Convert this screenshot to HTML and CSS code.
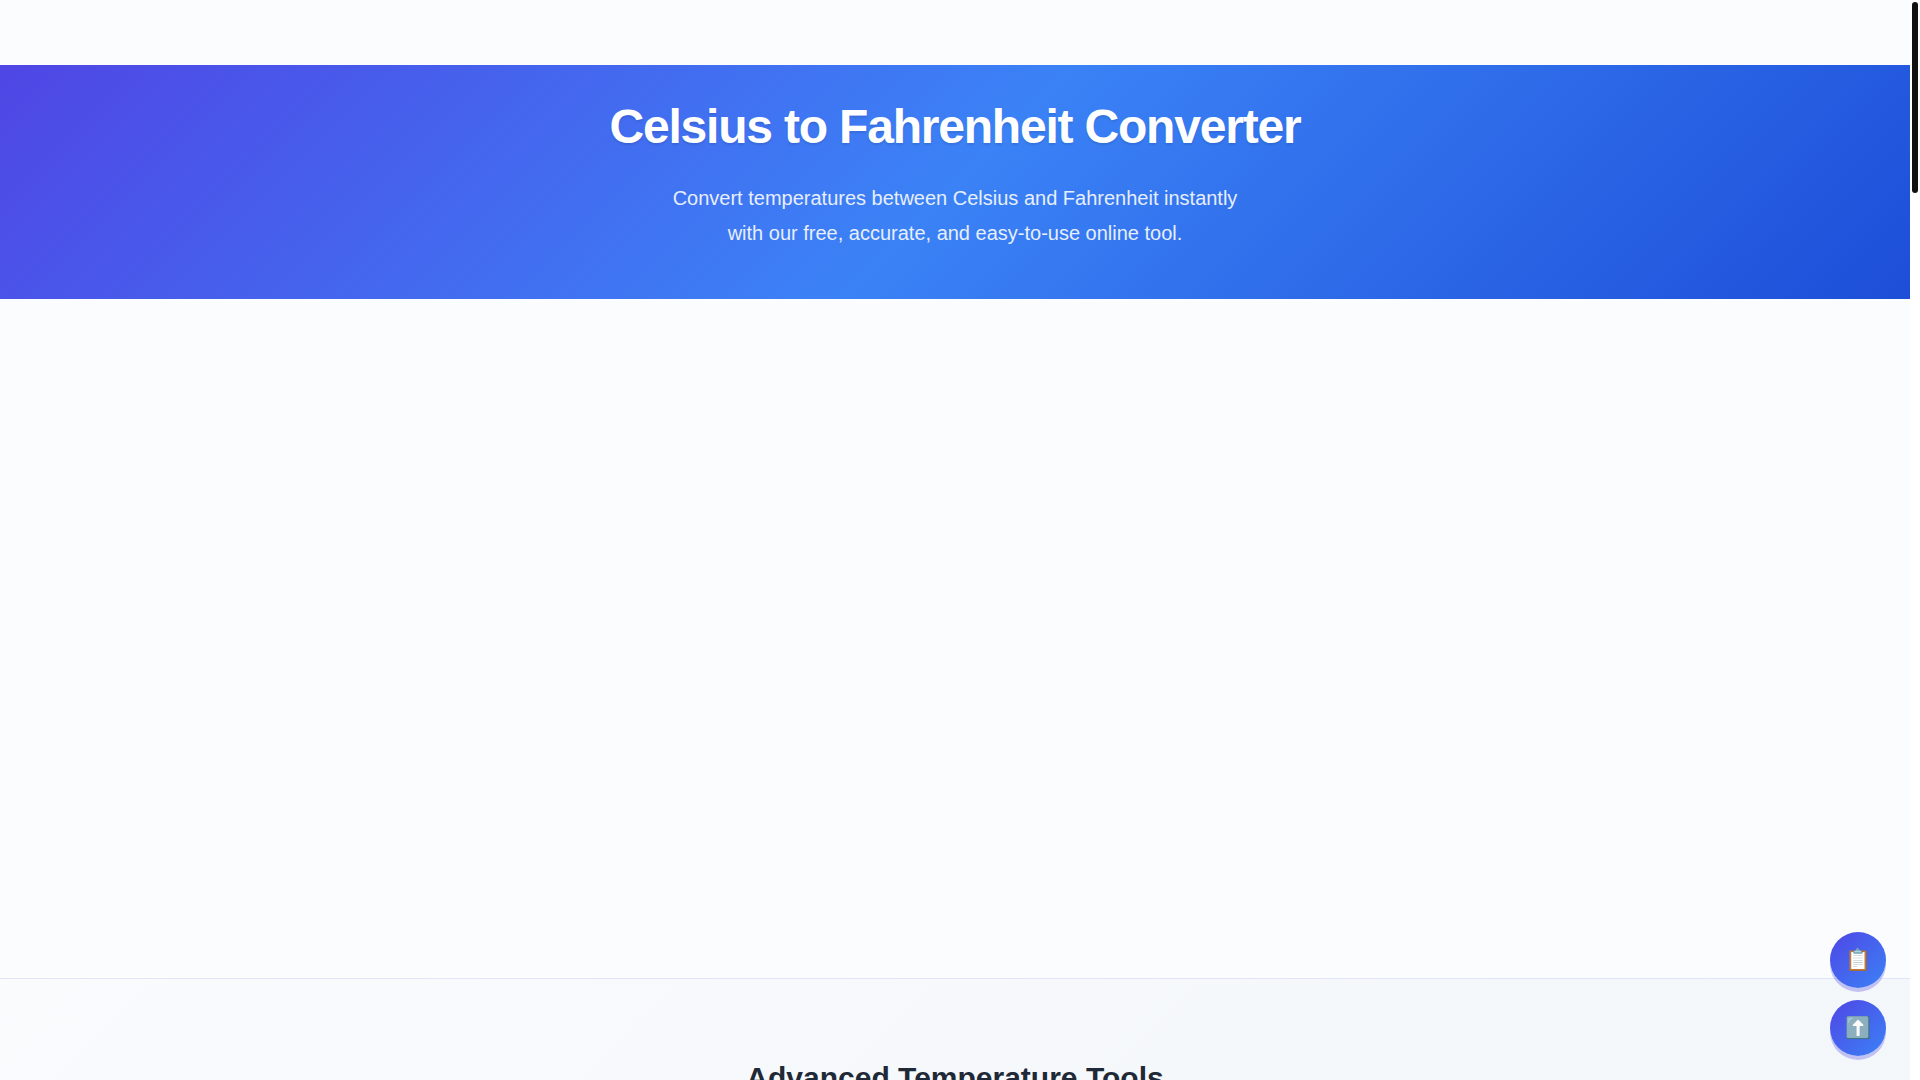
FILE: index.html
```html
<!DOCTYPE html>
<html lang="en">
<head>
<meta charset="utf-8">
<meta name="viewport" content="width=device-width, initial-scale=1">
<title>Celsius to Fahrenheit Converter</title>
<link rel="stylesheet" href="styles.css">
</head>
<body>
<div class="page">
  <div class="topbar"></div>
  <header class="hero">
    <h1 class="hero-title">Celsius to Fahrenheit Converter</h1>
    <p class="hero-text">Convert temperatures between Celsius and Fahrenheit instantly with our free, accurate, and easy-to-use online tool.</p>
  </header>
  <main>
    <section class="converter"></section>
    <section class="tools">
      <h2 class="tools-title">Advanced Temperature Tools</h2>
    </section>
  </main>
</div>
<div class="actions">
  <button class="action" type="button" aria-label="Copy result">📋</button>
  <button class="action" type="button" aria-label="Back to top">⬆️</button>
</div>
<div class="scroll-track"><div class="scroll-thumb"></div></div>
</body>
</html>
```
FILE: styles.css
```css
* {
  box-sizing: border-box;
  margin: 0;
}

html {
  background: #fff;
  scrollbar-width: none;
}

body {
  font-family: "Liberation Sans", Arial, sans-serif;
  color: #1f2937;
  padding-right: 10px;
}

.page {
  background: #fafcfe;
}

.topbar {
  height: 65px;
  background: #fbfcfd;
}

.hero {
  display: flex;
  flex-direction: column;
  align-items: center;
  gap: 24px;
  padding: 32px 24px 48px;
  color: #fff;
  text-align: center;
  background: linear-gradient(135deg, #4f46e5 0%, #3b82f6 50%, #1d4ed8 100%);
}

.hero-title {
  font-size: 48px;
  line-height: 60px;
  letter-spacing: -0.025em;
  text-shadow: 0 2px 2px rgba(0, 0, 0, 0.1);
}

.hero-text {
  max-width: 600px;
  font-size: 20px;
  line-height: 35px;
  opacity: 0.88;
}

.converter {
  min-height: 679px;
}

.tools {
  min-height: 900px;
  padding: 80px 24px;
  border-top: 1px solid #e2e4fa;
  background: linear-gradient(135deg, #f9fbfd 0%, #f1f5f9 100%);
}

.tools-title {
  font-size: 30px;
  line-height: 38px;
  text-align: center;
}

.actions {
  position: fixed;
  right: 34px;
  bottom: 24px;
  display: flex;
  flex-direction: column;
  gap: 12px;
}

.action {
  width: 56px;
  height: 56px;
  padding: 0;
  border: 0;
  border-radius: 50%;
  color: #fff;
  font-family: "Liberation Sans", "Noto Color Emoji", sans-serif;
  font-size: 21px;
  background: linear-gradient(135deg, #4f46e5, #3b82f6);
  box-shadow: 0 4px 0 rgba(79, 70, 229, 0.3);
  cursor: pointer;
}

.scroll-track {
  position: fixed;
  top: 0;
  right: 0;
  bottom: 0;
  width: 10px;
  padding: 2px;
  background: #fff;
}

.scroll-thumb {
  height: 191px;
  border-radius: 3px;
  background: #111;
}
```
